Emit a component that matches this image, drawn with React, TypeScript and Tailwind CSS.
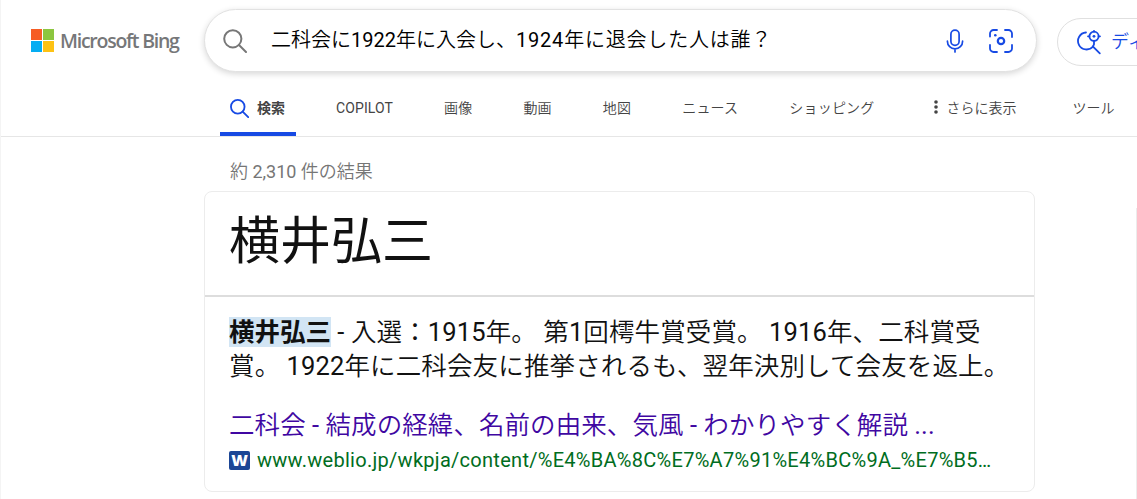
const tabs = ['画像', '動画', '地図', 'ニュース', 'ショッピング'];

// Kana and kanji are set light, Latin letters and digits keep the regular weight.
function Mixed({ text }: { text: string }) {
  return (
    <>
      {text.split(/([0-9,.\-]+)/).map((part, i) => (
        <span key={i} className={i % 2 ? 'font-normal' : 'font-[350]'}>{part}</span>
      ))}
    </>
  );
}

function SearchIcon({ className, strokeWidth }: { className: string; strokeWidth: number }) {
  return (
    <svg viewBox="0 0 24 24" className={className} fill="none" stroke="currentColor" strokeWidth={strokeWidth} strokeLinecap="round">
      <circle cx="9.8" cy="9.8" r="8.6" />
      <path d="M16 16l7 7" />
    </svg>
  );
}

function MicIcon() {
  return (
    <svg viewBox="0 0 18 24" className="h-6 w-[18px]" fill="none" stroke="currentColor" strokeWidth="1.7" strokeLinecap="round">
      <rect x="4.9" y="1.2" width="8.2" height="15.2" rx="4.1" />
      <path d="M1.4 12.2c0 4.6 3.4 7.6 7.6 7.6s7.6-3 7.6-7.6M9 20v3" />
    </svg>
  );
}

function LensIcon() {
  return (
    <svg viewBox="0 0 24 24" className="size-6" fill="none" stroke="currentColor" strokeWidth="1.8" strokeLinecap="round">
      <path d="M1 7.5V4.6A3.6 3.6 0 0 1 4.6 1H8M16 1h3.4A3.6 3.6 0 0 1 23 4.6V8M23 16v3.4a3.6 3.6 0 0 1-3.6 3.6H16M8 23H4.6A3.6 3.6 0 0 1 1 19.4V16" />
      <circle cx="12" cy="12" r="3.2" strokeWidth="2.2" />
      <circle cx="6.3" cy="6.3" r="1.3" fill="currentColor" stroke="none" />
    </svg>
  );
}

function DeepSearchIcon() {
  return (
    <svg viewBox="0 0 24 25" className="h-[25px] w-6 shrink-0" fill="none" stroke="currentColor" strokeWidth="1.8" strokeLinecap="round">
      <path d="M9 2.5A8.5 8.5 0 1 0 16 16.5L22.8 23.3" />
      <circle cx="17" cy="6.3" r="4.6" />
      <path d="M17 .9v.8M17 10.900v3.500l-1 2M11 6.300h1.400M21.600 6.300H23" />
      <circle cx="17" cy="6.3" r="1.4" fill="currentColor" stroke="none" />
    </svg>
  );
}

export default function App() {
  return (
    <div
      lang="ja"
      className="relative h-[499px] w-[1137px] overflow-hidden border-l border-[#f4f4f4] bg-white font-[Roboto,'Noto_Sans_CJK_JP',sans-serif] text-[#111]"
    >
      <header className="flex h-[137px] flex-col border-b border-[#e6e6e6]">
        <div className="flex h-[72px] shrink-0 items-start">
          <div className="flex w-[203px] shrink-0 items-start pt-[29px] pl-[30px]">
            <div className="grid size-[23px] shrink-0 grid-cols-2 gap-px">
              <span className="bg-[#f65d24]" />
              <span className="bg-[#8cc63f]" />
              <span className="bg-[#05adf2]" />
              <span className="bg-[#fdc214]" />
            </div>
            <span className="ml-1.5 -mt-px font-['Open_Sans',sans-serif] text-[19.5px] leading-[26px] font-semibold tracking-[-1.25px] whitespace-nowrap text-[#767779]">
              Microsoft Bing
            </span>
          </div>
          <div className="mt-[9px] flex h-[63px] w-[833px] shrink-0 items-center rounded-full border border-[#e2e2e2] bg-white shadow-[0_2px_6px_rgba(0,0,0,0.16)]">
            <SearchIcon className="ml-[18px] size-6 text-[#777]" strokeWidth={2} />
            <span className="mb-0.5 ml-[24px] flex-1 text-xl leading-7 whitespace-nowrap text-black">
              <Mixed text="二科会に1922年に入会し、" />
              <span className="tracking-[0.8px]"><Mixed text="1924年に退会した人は誰？" /></span>
            </span>
            <div className="mr-[23px] flex items-center gap-[25px] text-[#174ae4]">
              <MicIcon />
              <LensIcon />
            </div>
          </div>
          <div className="mt-[18px] ml-5 flex h-12 w-[160px] shrink-0 items-center rounded-full border border-[#e0e0e0] pl-[19px] text-[#174ae4]">
            <DeepSearchIcon />
            <span className="ml-[10px] text-lg whitespace-nowrap"><Mixed text="ディープ検索" /></span>
          </div>
        </div>
        <nav className="ml-[219px] flex h-16 items-stretch text-sm leading-[72px] whitespace-nowrap text-[#444]">
          <div className="flex h-16 w-[76px] items-start border-b-4 border-[#174ae4] pl-[10px] font-bold">
            <SearchIcon className="mt-[27px] size-[19px] text-[#174ae4]" strokeWidth={2.3} />
            <span className="ml-2">検索</span>
          </div>
          <span className="ml-10 tracking-[0.1px]">COPILOT</span>
          {tabs.map((tab) => (
            <span key={tab} className="ml-[51px] tracking-[0.2px]"><Mixed text={tab} /></span>
          ))}
          <span className="ml-[59px] flex items-start">
            <svg viewBox="0 0 4 14" className="mt-7 mr-[9px] h-3.5 w-1 fill-current">
              <circle cx="2" cy="2" r="1.8" />
              <circle cx="2" cy="7" r="1.8" />
              <circle cx="2" cy="12" r="1.8" />
            </svg>
            <Mixed text="さらに表示" />
          </span>
          <span className="ml-14"><Mixed text="ツール" /></span>
        </nav>
      </header>

      <main className="ml-[203px] flex items-start justify-between">
        <div className="w-[831px]">
          <p className="mt-[21px] ml-[26px] h-[33px] text-lg leading-7 text-[#767676]"><Mixed text="約 2,310 件の結果" /></p>
          <section className="h-[301px] rounded-lg border border-[#ececec]">
            <h1 className="h-[105px] border-b-2 border-[#ddd] pl-6 text-[51px] leading-[99px]">横井弘三</h1>
            <div className="px-6 pt-[18px]">
              <p className="text-[25.5px] leading-[34px] tracking-[0.13px] whitespace-nowrap">
                <strong className="bg-[#d2e5f4] font-bold tracking-normal">横井弘三</strong>
                <Mixed text=" - 入選：1915年。 第1回樗牛賞受賞。 1916年、二科賞受" />
                <br />
                <Mixed text="賞。 1922年に二科会友に推挙されるも、翌年決別して会友を返上。" />
              </p>
              <a className="mt-[25px] block text-[25.5px] leading-[34px] tracking-[0.08px] whitespace-nowrap text-[#4007a2]">
                <Mixed text="二科会 - 結成の経緯、名前の由来、気風 - わかりやすく解説 ..." />
              </a>
              <div className="mt-1 flex items-center">
                <span className="grid h-[19px] w-[21px] place-items-center rounded-xs bg-[#1c4695] font-['Open_Sans',sans-serif] text-base leading-none font-extrabold text-white">W</span>
                <span className="ml-[7px] text-xl leading-7 tracking-[0.28px] whitespace-nowrap text-[#006d21]">
                  www.weblio.jp/wkpja/content/%E4%BA%8C%E7%A7%91%E4%BC%9A_%E7%B5…
                </span>
              </div>
            </div>
          </section>
          <p className="mt-[3px] mr-16 text-right text-[15px] leading-6 text-[#666]">これは役に立ちましたか？</p>
        </div>
        <div className="mt-[71px] h-[291px] w-px bg-[#ececec]" />
      </main>
    </div>
  );
}
